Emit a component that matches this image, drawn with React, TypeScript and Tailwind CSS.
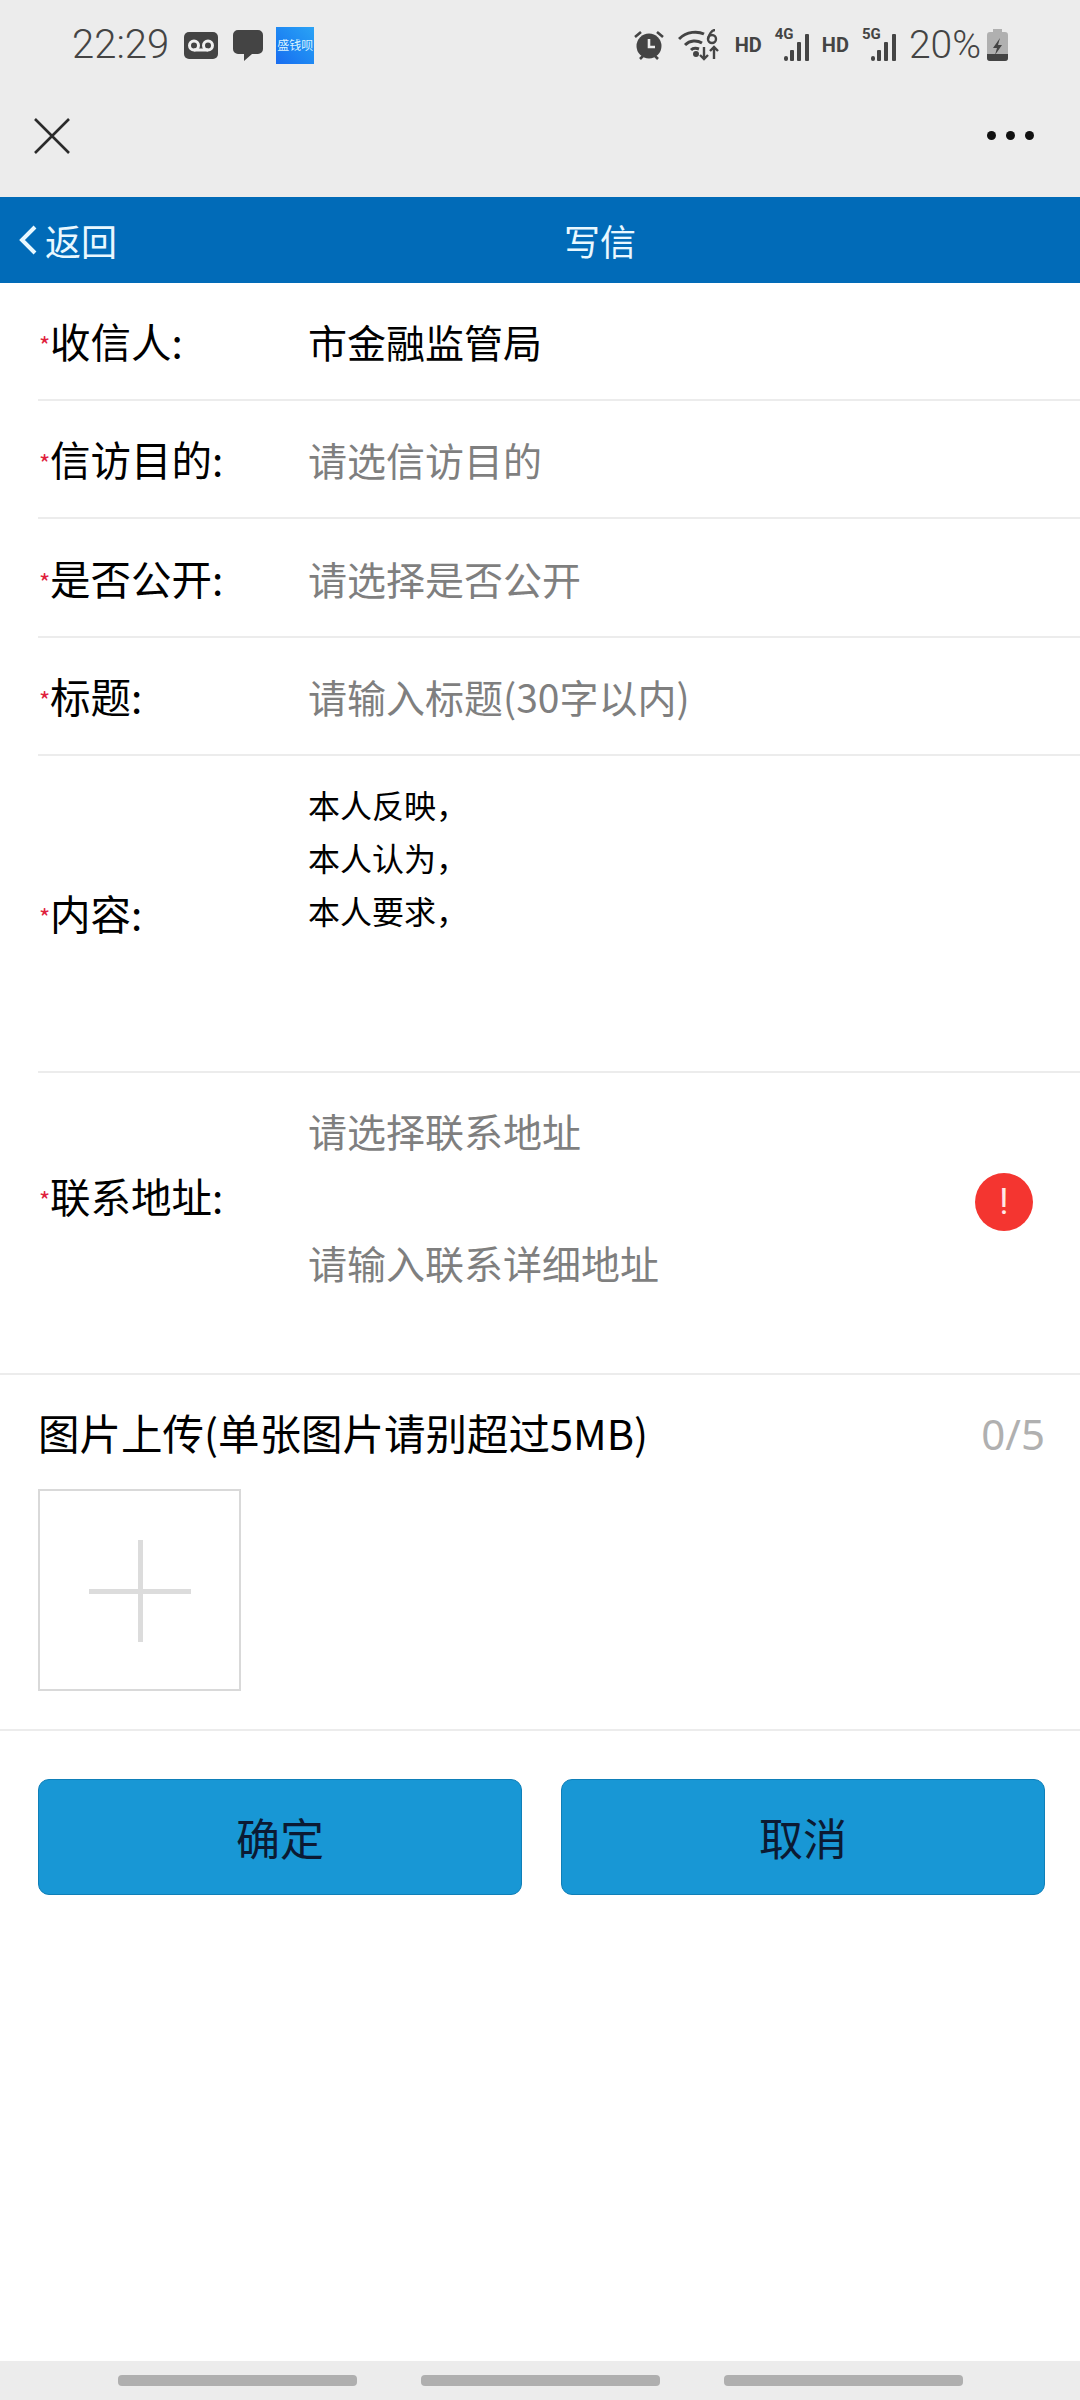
import React from "react";

const cjk = "font-['Noto_Sans_CJK_SC','Noto_Sans',sans-serif]";

const Label = ({ text, className = "" }: { text: string; className?: string }) => (
  <div className={`flex w-[270px] shrink-0 items-center text-[40.5px] leading-[60px] text-black ${className}`}>
    <span className="mt-[8px] w-[12px] pl-[1px] text-[24px] leading-none text-[#e0203c]">*</span>
    <span>{text}</span>
  </div>
);

const FormRow = ({
  label,
  value,
  filled,
  tall,
}: {
  label: string;
  value: string;
  filled?: boolean;
  tall?: boolean;
}) => (
  <div className={`flex items-center border-b-2 border-[#ececec] ${tall ? "h-[119px]" : "h-[118px]"}`}>
    <Label text={label} />
    <span className={`text-[39px] leading-[60px] ${filled ? "text-black" : "text-[#7f7f7f]"}`}>{value}</span>
  </div>
);

const SignalBars = () => (
  <svg width="36" height="28" viewBox="0 0 36 28" fill="#444">
    <rect x="9" y="23" width="4" height="5" rx="2" />
    <rect x="15" y="17" width="4" height="11" rx="1" />
    <rect x="22" y="9" width="4" height="19" rx="1" />
    <rect x="30" y="1" width="4" height="27" rx="1" />
  </svg>
);

const Network = ({ label }: { label: string }) => (
  <div className="relative h-[32px] w-[36px]">
    <div className="absolute bottom-0 left-0">
      <SignalBars />
    </div>
    <span className="absolute left-0 top-[-4px] font-['Roboto'] text-[15px] font-bold leading-[18px] text-[#444]">{label}</span>
  </div>
);

const StatusBar = () => (
  <div className="flex h-[90px] items-center pl-[72px] pr-[72px]">
    <span className="font-['Roboto'] text-[40px] font-light text-[#444]">22:29</span>
    <svg className="ml-[15px]" width="34" height="27" viewBox="0 0 34 27">
      <rect width="34" height="27" rx="5" fill="#444" />
      <circle cx="10" cy="13.5" r="4.5" fill="none" stroke="#f0f0f0" strokeWidth="3" />
      <circle cx="24" cy="13.5" r="4.5" fill="none" stroke="#f0f0f0" strokeWidth="3" />
      <path d="M10 18h14" stroke="#f0f0f0" strokeWidth="3" />
    </svg>
    <svg className="ml-[15px]" width="30" height="31" viewBox="0 0 30 31" fill="#444">
      <path d="M5 0h20a5 5 0 0 1 5 5v14a5 5 0 0 1-5 5h-6l-8 7v-7H5a5 5 0 0 1-5-5V5a5 5 0 0 1 5-5z" />
    </svg>
    <div className="ml-[13px] flex h-[37px] w-[38px] items-center justify-center bg-gradient-to-tr from-[#1a6cf0] to-[#2ba3f5] text-[12px] leading-none whitespace-nowrap text-[#d8f3ff]">
      盛钱呗
    </div>
    <div className="ml-auto flex items-center">
      <svg width="30" height="30" viewBox="0 0 30 30" fill="#444">
        <circle cx="15" cy="16" r="12.5" />
        <path d="M15 9v8h6" fill="none" stroke="#ececec" strokeWidth="2.6" />
        <path d="M1 7l6-5M29 7l-6-5M6 29l3-3M24 29l-3-3" stroke="#444" strokeWidth="2.6" />
      </svg>
      <svg className="ml-[14px]" width="41" height="32" viewBox="0 0 41 32" fill="none" stroke="#444" strokeWidth="3">
        <path d="M1 10c8-8 19-8 25-5" />
        <path d="M7 16c5-5 12-5 17-2" />
        <path d="M13 21c2-2 5-2 8-1" />
        <circle cx="18" cy="25" r="1.5" fill="#444" />
        <path d="M26 18v12M22 26l4 4 4-4M36 30V18M32 22l4-4 4 4" strokeWidth="2.4" />
        <circle cx="34" cy="10" r="4" strokeWidth="2.4" />
        <path d="M37 1c-3 0-6 4-7 9" strokeWidth="2.4" />
      </svg>
      <span className="ml-[16px] font-['Roboto'] text-[20px] font-bold text-[#444]">HD</span>
      <div className="ml-[13px]">
        <Network label="4G" />
      </div>
      <span className="ml-[11px] font-['Roboto'] text-[20px] font-bold text-[#444]">HD</span>
      <div className="ml-[13px]">
        <Network label="5G" />
      </div>
      <span className="ml-[11px] font-['Roboto'] text-[39px] font-light text-[#444]">20%</span>
      <svg className="ml-[6px]" width="21" height="32" viewBox="0 0 21 32">
        <path d="M6 0h9v3h3a3 3 0 0 1 3 3v23a3 3 0 0 1-3 3H3a3 3 0 0 1-3-3V6a3 3 0 0 1 3-3h3z" fill="#b0b0b0" />
        <path d="M0 25h21v4a3 3 0 0 1-3 3H3a3 3 0 0 1-3-3z" fill="#444" />
        <path d="M13 9l-7 10h4l-2 7 7-10h-4z" fill="#444" />
      </svg>
    </div>
  </div>
);

const Toolbar = () => (
  <div className="flex h-[107px] items-center justify-between pb-[16px] pl-[34px] pr-[46px]">
    <svg width="36" height="36" viewBox="0 0 36 36" stroke="#2b2b2b" strokeWidth="2.6">
      <path d="M1 1l34 34M35 1L1 35" />
    </svg>
    <div className="flex gap-[10px]">
      <div className="h-[9px] w-[9px] rounded-full bg-[#111]" />
      <div className="h-[9px] w-[9px] rounded-full bg-[#111]" />
      <div className="h-[9px] w-[9px] rounded-full bg-[#111]" />
    </div>
  </div>
);

const NavBar = () => (
  <div className="relative flex h-[86px] items-center justify-center bg-[#016bb8] text-[36px] text-[#e9f8ff]">
    <div className="absolute left-[18px] top-0 flex h-full items-center gap-[8px]">
      <svg width="19" height="30" viewBox="0 0 19 30" fill="none" stroke="#e9f8ff" strokeWidth="4">
        <path d="M17 2L4 15l13 13" />
      </svg>
      <span>返回</span>
    </div>
    <span className="ml-[120px]">写信</span>
  </div>
);

const App = () => {
  return (
    <div className={`flex min-h-[2400px] w-[1080px] flex-col bg-white ${cjk}`}>
      <div className="bg-[#ececec]">
        <StatusBar />
        <Toolbar />
      </div>
      <NavBar />

      <div className="pl-[38px]">
        <FormRow label="收信人:" value="市金融监管局" filled />
        <FormRow label="信访目的:" value="请选信访目的" />
        <FormRow label="是否公开:" value="请选择是否公开" tall />
        <FormRow label="标题:" value="请输入标题(30字以内)" />

        <div className="flex h-[317px] items-start border-b-2 border-[#ececec] pt-[22px]">
          <Label text="内容:" className="mt-[105px]" />
          <div className="text-[32px] leading-[53px] text-black">
            <div>本人反映，</div>
            <div>本人认为，</div>
            <div>本人要求，</div>
          </div>
        </div>
      </div>

      <div className="flex h-[302px] items-start border-b-2 border-[#ececec] pl-[38px] pr-[47px]">
        <Label text="联系地址:" className="mt-[93px]" />
        <div className="mt-[27px] flex flex-1 flex-col gap-[72px] text-[39px] leading-[60px] text-[#7f7f7f]">
          <span>请选择联系地址</span>
          <span>请输入联系详细地址</span>
        </div>
        <div className="mt-[100px] flex h-[58px] w-[58px] items-center justify-center rounded-full bg-[#f43530] font-['Roboto'] text-[36px] leading-none text-[#ffe9e6]">
          !
        </div>
      </div>

      <div className="flex h-[356px] flex-col border-b-2 border-[#ececec] px-[35px] pl-[38px]">
        <div className="mt-[27px] flex items-start justify-between text-[41.5px] leading-[60px] text-black">
          <span>图片上传(单张图片请别超过5MB)</span>
          <span className="mt-[3px] font-['Noto_Sans'] text-[42px] leading-[57px] text-[#b0b0b0]">0/5</span>
        </div>
        <div className="relative mt-[27px] h-[202px] w-[203px] border-2 border-[#d9d9d9]">
          <div className="absolute left-[49px] top-[98px] h-[5px] w-[102px] bg-[#dcdcdc]" />
          <div className="absolute left-[98px] top-[49px] h-[102px] w-[5px] bg-[#dcdcdc]" />
        </div>
      </div>

      <div className="flex gap-[39px] px-[35px] pl-[38px] pt-[48px]">
        <button className="h-[116px] w-[484px] rounded-[11px] border border-[#0f7fb8] bg-[#1897d5] text-[44px] text-[#0b1a33]">确定</button>
        <button className="h-[116px] w-[484px] rounded-[11px] border border-[#0f7fb8] bg-[#1897d5] text-[44px] text-[#0b1a33]">取消</button>
      </div>

      <div className="mt-auto flex h-[39px] gap-[64px] bg-[#ececec] pl-[118px] pt-[14px]">
        <div className="h-[11px] w-[239px] rounded-[4px] bg-[#afafaf]" />
        <div className="h-[11px] w-[239px] rounded-[4px] bg-[#afafaf]" />
        <div className="h-[11px] w-[239px] rounded-[4px] bg-[#afafaf]" />
      </div>
    </div>
  );
};

export default App;
